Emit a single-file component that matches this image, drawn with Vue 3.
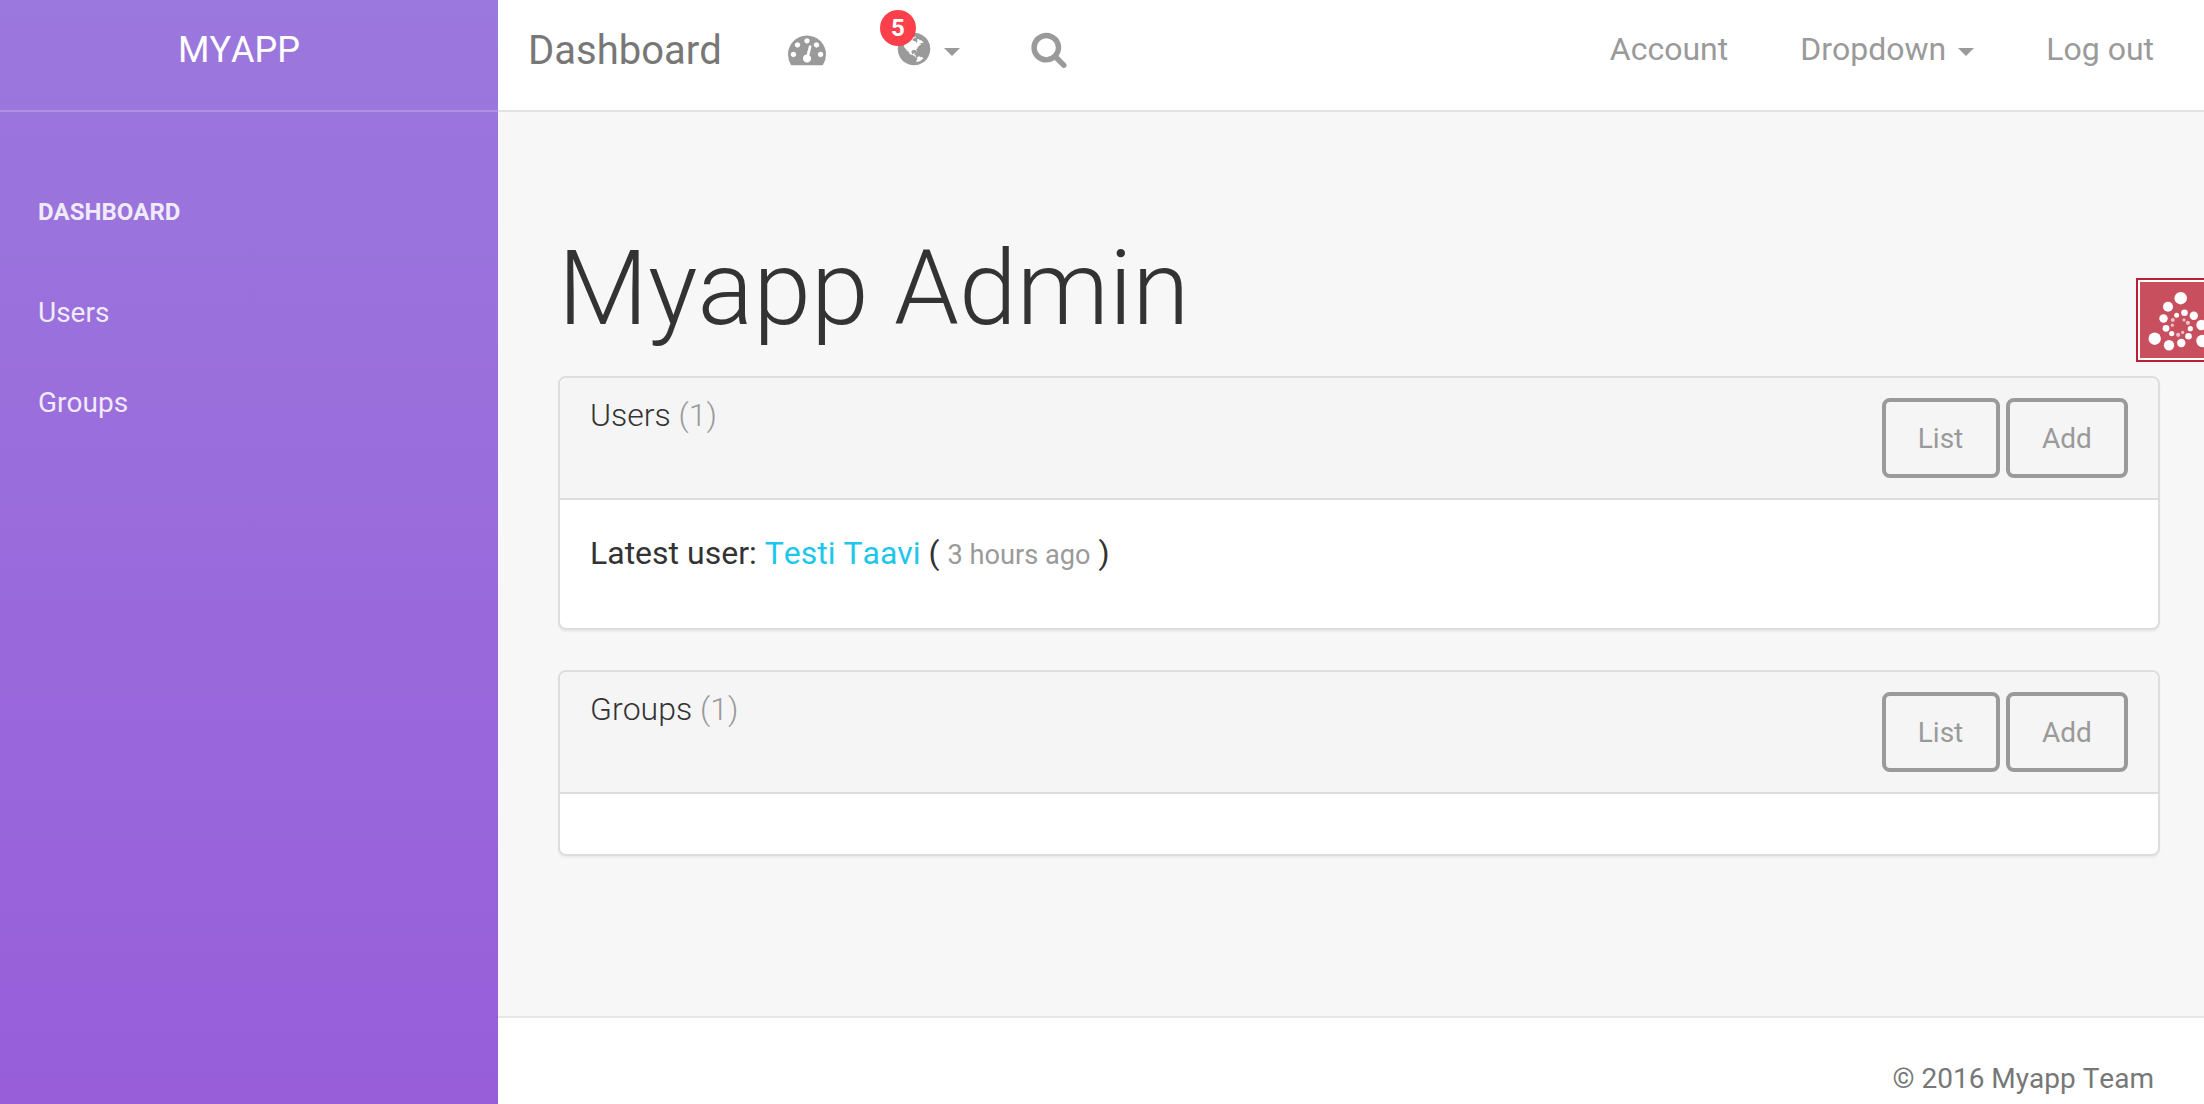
<script setup>
const sidebarLinks = ['Users', 'Groups']

const panels = [
  { title: 'Users', count: 1, latest: { name: 'Testi Taavi', when: '3 hours ago' } },
  { title: 'Groups', count: 1, latest: null },
]

// Rings of the debug toolbar logo: [cx, cy, r]
const dots = [
  [36.7, 16.2, 6.2], [24, 24.8, 5], [19.5, 36.5, 4.2], [22, 46.3, 3.4], [10.7, 56.7, 6.2],
  [25, 63.3, 5.2], [37.3, 61, 4.2], [44.5, 54.3, 3.3], [58.5, 59, 6.2], [57.5, 43, 5.2],
  [49.8, 33.7, 4.2], [40.5, 30.7, 3.3], [32.6, 33.2, 2.5], [28.8, 38, 2], [28.3, 43.2, 1.6],
  [27.7, 51.6, 2.6], [34.2, 52.8, 2.1], [38.7, 50.4, 1.6], [46.3, 46.7, 2.6], [43.9, 40.8, 2.1],
  [40, 37.9, 1.6],
]
</script>

<template>
  <div class="wrapper">
    <aside class="sidebar">
      <div class="logo">MYAPP</div>
      <nav class="side-nav">
        <a class="side-link heading">DASHBOARD</a>
        <a v-for="link in sidebarLinks" :key="link" class="side-link">{{ link }}</a>
      </nav>
    </aside>

    <div class="main">
      <header class="navbar">
        <a class="brand">Dashboard</a>
        <svg class="icon tacho" viewBox="0 0 1792 1792"><path d="M384 1152q0-53-37.5-90.5t-90.5-37.5-90.5 37.5-37.5 90.5 37.5 90.5 90.5 37.5 90.5-37.5 37.5-90.5zm192-448q0-53-37.5-90.5t-90.5-37.5-90.5 37.5-37.5 90.5 37.5 90.5 90.5 37.5 90.5-37.5 37.5-90.5zm428 481l101-382q6-26-7.5-48.5t-38.5-29.5-48 6.5-30 39.5l-101 382q-60 5-107 43.5t-63 98.5q-20 77 20 146t117 89 146-20 89-117q16-60-6-117t-72-91zm660-33q0-53-37.5-90.5t-90.5-37.5-90.5 37.5-37.5 90.5 37.5 90.5 90.5 37.5 90.5-37.5 37.5-90.5zm-640-640q0-53-37.5-90.5t-90.5-37.5-90.5 37.5-37.5 90.5 37.5 90.5 90.5 37.5 90.5-37.5 37.5-90.5zm448 192q0-53-37.5-90.5t-90.5-37.5-90.5 37.5-37.5 90.5 37.5 90.5 90.5 37.5 90.5-37.5 37.5-90.5zm320 448q0 261-141 483-19 29-54 29h-1402q-35 0-54-29-141-221-141-483 0-182 71-348t191-286 286-191 348-71 348 71 286 191 191 286 71 348z" /></svg>
        <div class="notify">
          <svg class="icon" viewBox="0 0 1792 1792"><path d="M896 128q209 0 385.5 103t279.5 279.5 103 385.5-103 385.5-279.5 279.5-385.5 103-385.5-103-279.5-279.5-103-385.5 103-385.5 279.5-279.5 385.5-103zm274 521q-2 1-9.5 9.5t-13.5 9.5q2 0 4.5-5t5-11 3.5-7q6-7 22-15 14-6 52-12 34-8 51 11-2-2 9.5-13t14.5-12q3-2 15-4.5t15-7.5l2-22q-12 1-17.5-7t-6.5-21q0 2-6 8 0-7-4.5-8t-11.5 1-9 1q-10-3-15-7.5t-8-16.5-4-15q-2-5-9.5-11t-9.5-10q-1-2-2.5-5.5t-3-6.5-4-5.5-5.5-2.5-7 5-7.5 10-4.5 5q-3-2-6-1.5t-4.5 1-4.5 3-5 3.5q-3 2-8.5 3t-8.5 2q15-5-1-11-10-4-16-3 9-4 7.5-12t-8.5-14h5q-1-4-8.5-8.5t-17.5-8.5-13-6q-8-5-34-9.5t-33-.5q-5 6-4.5 10.5t4 14 3.5 12.5q1 6-5.5 13t-6.5 12q0 7 14 15.5t10 21.5q-3 8-16 16t-16 12q-5 8-1.5 18.5t10.5 16.5q2 2 1.5 4t-3.5 4.5-5.5 4-6.5 3.5l-3 2q-11 5-20.5-6t-13.5-26q-7-25-16-30-23-8-29 1-5-13-41-26-25-9-58-4 6-1 0-15-7-15-19-12 3-6 4-17.5t1-13.5q3-13 12-23 1-1 7-8.5t9.5-13.5.5-6q35 4 50-11 5-5 11.5-17t10.5-17q9-6 14-5.5t14.5 5.5 14.5 5q14 1 15.5-11t-7.5-20q12 1 3-17-4-7-8-9-12-4-27 5-8 4 2 8-1-1-9.5 10.5t-16.5 17.5-16-5q-1-1-5.5-13.5t-9.5-13.5q-8 0-16 15 3-8-11-15t-24-8q19-12-8-27-7-4-20.5-5t-19.5 4q-5 7-5.5 11.5t5 8 10.5 5.5 11.5 4 8.5 3q14 10 8 14-2 1-8.5 3.5t-11.5 4.5-6 4q-3 4 0 14t-2 14q-5-5-9-17.5t-7-16.5q7 9-25 6l-10-1q-4 0-16 2t-20.5 1-13.5-8q-4-8 0-20 1-4 4-2-4-3-11-9.5t-10-8.5q-46 15-94 41 6 1 12-1 5-2 13-6.5t10-5.5q34-14 42-7l5-5q14 16 20 25-7-4-30-1-20 6-22 12 7 12 5 18-4-3-11.5-10t-14.5-11-15-5q-16 0-22 1-146 80-235 222 7 7 12 8 4 1 5 9t2.5 11 11.5-3q9 8 3 19 1-1 44 27 19 17 21 21 3 11-10 18-1-2-9-9t-9-4q-3 5 .5 18.5t10.5 12.5q-7 0-9.5 16t-2.5 35.5-1 23.5l2 1q-3 12 5.5 34.5t21.5 19.5q-13 3 20 43 6 8 8 9 3 2 12 7.5t15 10 10 10.5q4 5 10 22.5t14 23.5q-2 6 9.5 20t10.5 23q-1 0-2.5 1t-2.5 1q3 7 15.5 14t15.5 13q1 3 2 10t3 11 8 2q2-20-24-62-15-25-17-29-3-5-5.5-15.5t-4.5-14.5q2 0 6 1.5t8.5 3.5 7.5 4 2 3q-3 7 2 17.5t12 18.5 17 19 12 13q6 6 14 19.5t0 13.5q9 0 20 10.5t17 19.5q5 8 8 26t5 24q2 7 8.5 13.5t12.5 9.5l16 8 13 7q5 2 18.5 10.5t21.5 11.5q10 4 16 4t14.5-2.5 13.5-3.5q15-2 29 15t21 21q36 19 55 11-2 1 .5 7.5t8 15.5 9 14.5 5.5 8.5q5 6 18 15t18 15q6-4 7-9-3 8 7 20t18 10q14-3 14-32-31 15-49-18 0-1-2.5-5.5t-4-8.5-2.5-8.5 0-7.5 5-3q9 0 10-3.5t-2-12.5-4-13q-1-8-11-20t-12-15q-5 9-16 8t-16-9q0 1-1.5 5.5t-1.5 6.5q-13 0-15-1 1-3 2.5-17.5t3.5-22.5q1-4 5.5-12t7.5-14.5 4-12.5-4.5-9.5-17.5-2.5q-19 1-26 20-1 3-3 10.5t-5 11.5-9 7q-7 3-24 2t-24-5q-13-8-22.5-29t-9.5-37q0-10 2.5-26.5t3-25-5.5-24.5q3-2 9-9.5t10-10.5q2-1 4.5-1.5t4.5 0 4-1.5 3-6q-1-1-4-3-3-3-4-3 7 3 28.5-1.5t27.5 1.5q15 11 22-2 0-1-2.5-9.5t-.5-13.5q5 27 29 9 3 3 15.5 5t17.5 5q3 2 7 5.5t5.5 4.5 5-.5 8.5-6.5q10 14 12 24 11 40 19 44 7 3 11 2t4.5-9.5 0-14-1.5-12.5l-1-8v-18l-1-8q-15-3-18.5-12t1.5-18.5 15-18.5q1-1 8-3.5t15.5-6.5 12.5-8q21-19 15-35 7 0 11-9-1 0-5-3t-7.5-5-4.5-2q9-5 2-16 5-3 7.5-11t7.5-10q9 12 21 2 7-8 1-16 5-7 20.5-10.5t18.5-9.5q7 2 8-2t1-12 3-12q4-5 15-9t13-5l17-11q3-4 0-4 18 2 31-11 10-11-6-20 3-6-3-9.5t-15-5.5q3-1 11.5-.5t10.5-1.5q15-10-7-16-17-5-43 12zm-163 877q206-36 351-189-3-3-12.5-4.5t-12.5-3.5q-18-7-24-8 1-7-2.5-13t-8-9-12.5-8-11-7q-2-2-7-6t-7-5.5-7.5-4.5-8.5-2-10 1l-3 1q-3 1-5.5 2.5t-5.5 3-4 3 0 2.5q-21-17-36-22-5-1-11-5.5t-10.5-7-10-1.5-11.5 7q-5 5-6 15t-2 13q-7-5 0-17.5t2-18.5q-3-6-10.5-4.5t-12 4.5-11.5 8.5-9 6.5-8.5 5.5-8.5 7.5q-3 4-6 12t-5 11q-2-4-11.5-6.5t-9.5-5.5q2 10 4 35t5 38q7 31-12 48-27 25-29 40-4 22 12 26 0 7-8 20.5t-7 21.5q0 6 2 16z" /></svg>
          <span class="badge">5</span>
          <i class="caret"></i>
        </div>
        <svg class="icon search" viewBox="0 0 1792 1792"><path d="M1216 832q0-185-131.5-316.5t-316.5-131.5-316.5 131.5-131.5 316.5 131.5 316.5 316.5 131.5 316.5-131.5 131.5-316.5zm512 832q0 52-38 90t-90 38q-54 0-90-38l-343-342q-179 124-399 124-143 0-273.5-55.5t-225-150-150-225-55.5-273.5 55.5-273.5 150-225 225-150 273.5-55.5 273.5 55.5 225 150 150 225 55.5 273.5q0 220-124 399l343 343q37 37 37 90z" /></svg>
        <nav class="nav-right">
          <a>Account</a>
          <a class="dropdown">Dropdown<i class="caret"></i></a>
          <a>Log out</a>
        </nav>
      </header>

      <main class="content">
        <h1>Myapp Admin</h1>
        <section v-for="panel in panels" :key="panel.title" class="panel">
          <div class="panel-head">
            <h3>{{ panel.title }} <span class="count">({{ panel.count }})</span></h3>
            <div class="actions">
              <button class="btn list">List</button>
              <button class="btn add">Add</button>
            </div>
          </div>
          <div class="panel-body">
            <p v-if="panel.latest">Latest user: <a class="user">{{ panel.latest.name }}</a> ( <small>{{ panel.latest.when }}</small> )</p>
          </div>
        </section>
      </main>

      <footer class="footer">© 2016 Myapp Team</footer>
    </div>

    <div class="debug-handle">
      <svg width="64" height="76" viewBox="0 0 64 76">
        <circle v-for="(d, i) in dots" :key="i" :cx="d[0] + 4" :cy="d[1]" :r="d[2]" :opacity="d[2] < 2.2 ? 0.65 : 1" />
      </svg>
    </div>
  </div>
</template>

<style>
body {
  margin: 0;
  overflow: hidden;
}
</style>

<style scoped>
.wrapper {
  position: relative;
  display: flex;
  width: 2204px;
  height: 1104px;
  overflow: hidden;
  font-family: Roboto, sans-serif;
  font-size: 32px;
  font-kerning: none;
  color: #333;
}
.sidebar {
  flex: none;
  width: 498px;
  background: linear-gradient(to bottom, #9b78dd 0%, #985eda 100%);
  color: #fff;
}
.logo {
  height: 90px;
  padding: 20px 20px 0 0;
  border-bottom: 2px solid rgba(255, 255, 255, 0.2);
  font-size: 36px;
  line-height: 60px;
  text-align: center;
}
.side-nav {
  display: flex;
  flex-direction: column;
  gap: 30px;
  padding: 70px 36px 0 38px;
}
.side-link {
  font-size: 28px;
  line-height: 60px;
  opacity: 0.86;
}
.side-link.heading {
  margin-bottom: 11px;
  font-size: 24px;
  font-weight: 700;
}
.main {
  flex: 1;
  display: flex;
  flex-direction: column;
  min-width: 0;
  background: #f7f7f7;
}
.navbar {
  display: flex;
  align-items: flex-start;
  height: 110px;
  padding: 0 50px 0 30px;
  border-bottom: 2px solid #e3e3e3;
  background: #fff;
  color: #9a9a9a;
}
.brand {
  width: 260px;
  padding-top: 21px;
  font-size: 40px;
  line-height: 60px;
  color: #777;
}
.icon {
  display: block;
  width: 38px;
  height: 38px;
  margin-top: 29.5px;
  fill: #9a9a9a;
}
.notify {
  position: relative;
  display: flex;
  margin-left: 69.3px;
}
.caret {
  display: inline-block;
  border: 8px solid transparent;
  border-top-color: #9a9a9a;
  border-bottom: 0;
}
.notify .caret {
  height: 0;
  margin: 48px 0 0 11px;
}
.badge {
  position: absolute;
  top: 10px;
  left: -15.3px;
  width: 36px;
  height: 36px;
  border-radius: 50%;
  background: #fb404b;
  color: #fff;
  font-size: 24px;
  font-weight: 700;
  line-height: 36px;
  text-align: center;
}
.search {
  margin-left: 69.7px;
}
.nav-right {
  display: flex;
  gap: 72px;
  margin-left: auto;
  padding-top: 19px;
  line-height: 60px;
}
.dropdown {
  display: flex;
}
.dropdown .caret {
  height: 0;
  margin: 29px 0 0 12px;
}
.content {
  flex: 1;
  padding: 120px 44px 0 60px;
}
h1 {
  margin: 0 0 30px;
  font-size: 104px;
  font-weight: 300;
  line-height: 114px;
}
.panel {
  margin-bottom: 40px;
  border: 2px solid #ddd;
  border-radius: 8px;
  background: #fff;
  box-shadow: 0 2px 2px rgba(0, 0, 0, 0.05);
}
.panel-head {
  display: flex;
  justify-content: space-between;
  height: 80px;
  padding: 20px 30px;
  border-bottom: 2px solid #ddd;
  border-radius: 6px 6px 0 0;
  background: #f5f5f5;
}
h3 {
  margin: 0;
  font-size: 32px;
  font-weight: 300;
  line-height: 34px;
}
.count {
  color: #9a9a9a;
}
.actions {
  display: flex;
  gap: 6px;
}
.btn {
  height: 80px;
  padding: 2px 0 0;
  border: 4px solid #9a9a9a;
  border-radius: 8px;
  background: transparent;
  color: #9a9a9a;
  font: 400 28px/68px Roboto, sans-serif;
}
.list {
  width: 118px;
  padding-right: 1px;
}
.add {
  width: 122px;
}
.panel-body {
  padding: 30px;
}
.panel-body p {
  height: 46px;
  margin: 0 0 22px;
  line-height: 46px;
}
.user {
  color: #1dc7ea;
}
small {
  font-size: 27.2px;
  color: #9a9a9a;
}
.footer {
  height: 45px;
  padding: 41px 50px 0 0;
  border-top: 2px solid #e7e7e7;
  background: #fff;
  color: #777;
  font-size: 28px;
  line-height: 40px;
  text-align: right;
}
.debug-handle {
  position: absolute;
  top: 278px;
  right: 0;
  box-sizing: border-box;
  width: 68px;
  height: 84px;
  border: 2px solid #ba1f33;
  border-right: 0;
  background: #c74f5e;
  box-shadow: inset 2px 2px #fff, inset 0 -2px #fff;
}
.debug-handle svg {
  display: block;
  margin: 2px 0 0 2px;
  fill: #fff;
}
</style>
